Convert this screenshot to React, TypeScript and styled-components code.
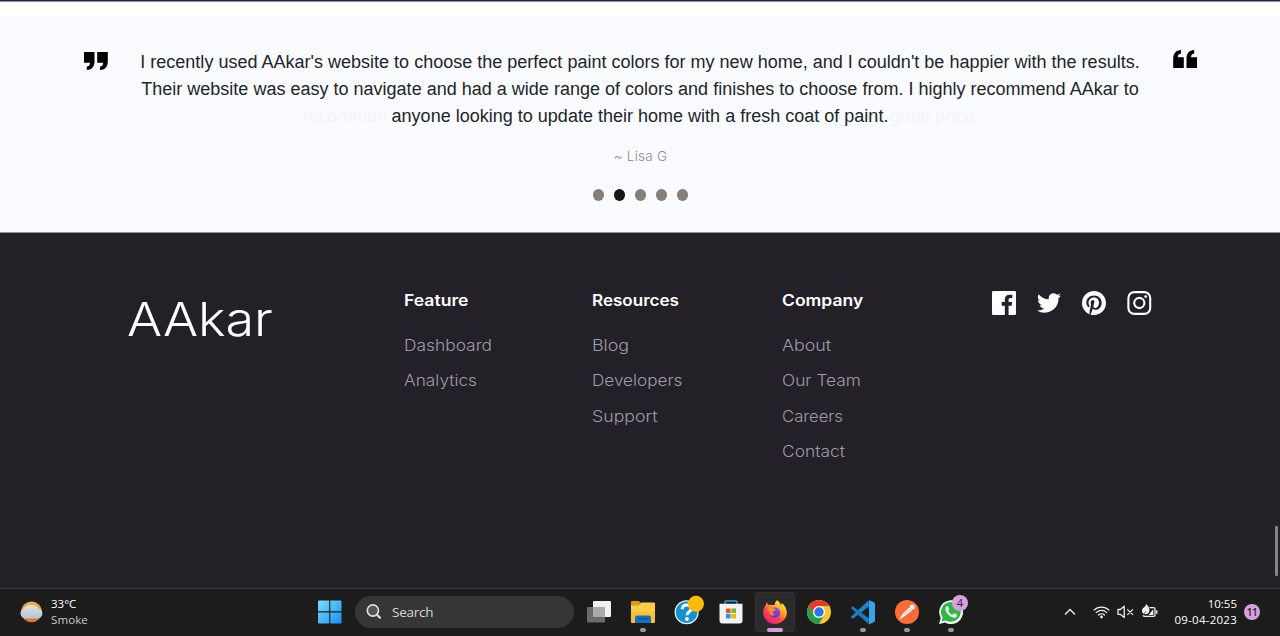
import React from "react";
import styled, { createGlobalStyle } from "styled-components";

const Global = createGlobalStyle`
  * { box-sizing: border-box; }
  body { margin: 0; background: #fff; overflow: hidden; }
  svg { display: block; flex: none; overflow: visible; }
`;

const brandFont = `Inter, "Liberation Sans", sans-serif`;
const systemFont = `"Open Sans", "Noto Sans", sans-serif`;

const Screen = styled.div`
  position: relative;
  width: 1280px;
  height: 636px;
  display: flex;
  flex-direction: column;
`;

const TopEdge = styled.div`
  height: 2px;
  margin-bottom: 14px;
  background: linear-gradient(#2a2145 50%, #93899f 50%);
`;

/* ---------- Testimonials ---------- */

const Testimonials = styled.section`
  height: 217px;
  padding: 33px 83px 0 84px;
  background: #fafbfe;
  border-bottom: 1px solid #918e97;
`;

const QuoteRow = styled.div`
  display: flex;
  justify-content: space-between;
`;

const QuoteMark = styled.svg<{ $flipped?: boolean }>`
  width: 24px;
  height: 18px;
  margin-top: ${(p) => (p.$flipped ? 1 : 3)}px;
  transform: ${(p) => (p.$flipped ? "rotate(180deg)" : "none")};
`;

const QuoteText = styled.blockquote`
  margin: 0;
  display: flex;
  flex-direction: column;
  align-items: center;
  font: 18px/27px "Liberation Sans", Arial, sans-serif;
  letter-spacing: 0.008px;
  color: #212529;
  white-space: nowrap;
`;

const QuoteLine = styled.span`
  position: relative;
  right: 0.5px;
`;

const Fading = styled.span<{ $side: "before" | "after" }>`
  position: absolute;
  top: 0;
  ${(p) => (p.$side === "before" ? "right: calc(100% + 4px)" : "left: calc(100% + 1px)")};
  color: #f4f5f8;
`;

const Author = styled.p`
  margin: 16px 0 0;
  text-align: center;
  font: 300 13.5px/21px ${brandFont};
  letter-spacing: 0.25px;
  color: #8d8d92;
`;

const Dots = styled.div`
  display: flex;
  justify-content: center;
  gap: 9.5px;
  margin: 22px 0.5px 0 0;
`;

const Dot = styled.i<{ $active?: boolean }>`
  width: 11.5px;
  height: 12px;
  border-radius: 50%;
  background: ${(p) => (p.$active ? "#151716" : "#857f79")};
`;

/* ---------- Footer ---------- */

const Footer = styled.footer`
  height: 355px;
  display: grid;
  grid-template-columns: 276px 188.5px 190px 210px 1fr;
  padding: 57px 0 0 127.5px;
  background: #232027;
  font-family: ${brandFont};
`;

const Brand = styled.div`
  justify-self: start;
  height: 60px;
  font-size: 46.5px;
  line-height: 58px;
  font-weight: 330;
  margin-left: -1px;
  transform: scaleX(1.12);
  transform-origin: left;
  color: #fff;
`;

const Column = styled.nav`
  display: flex;
  flex-direction: column;
  align-items: flex-start;
  padding-top: 1px;
`;

const Heading = styled.h4<{ $stretch: number }>`
  margin: 0 0 17.4px;
  font-size: 15.5px;
  line-height: 20px;
  font-weight: 570;
  transform: scaleX(${(p) => p.$stretch});
  transform-origin: left;
  color: #fff;
`;

const FooterLink = styled.a<{ $stretch: number }>`
  height: 35.1px;
  font-size: 15.5px;
  line-height: 36px;
  font-weight: 310;
  transform: scaleX(${(p) => p.$stretch});
  transform-origin: left;
  color: #9e9aa7;
`;

const Social = styled.div`
  display: flex;
  gap: 21px;
  padding-top: 1px;
`;

const SocialIcon = styled.svg.attrs({ viewBox: "0 0 24 24" })`
  width: 24px;
  height: 24px;
  fill: #fff;
`;

const Scrollbar = styled.div`
  position: absolute;
  right: 2px;
  top: 526px;
  width: 3px;
  height: 50px;
  border-radius: 1px;
  background: #858387;
`;

/* ---------- Taskbar ---------- */

const Taskbar = styled.div`
  height: 48px;
  display: flex;
  align-items: center;
  padding: 0 20px 2px 19px;
  background: #1c1c1c;
  border-top: 1px solid #3b393c;
  font-family: ${systemFont};
  color: #fff;
`;

const Weather = styled.div`
  width: 299px;
  display: flex;
  align-items: center;
  gap: 7px;
`;

const SmallText = styled.div<{ $dim?: boolean; $track?: number }>`
  font-size: 11.5px;
  line-height: 16px;
  white-space: nowrap;
  letter-spacing: ${(p) => p.$track ?? 0}px;
  color: ${(p) => (p.$dim ? "#c9c9c9" : "#fff")};
`;

const Search = styled.div`
  width: 219px;
  height: 32px;
  margin: 0 3px 0 13px;
  padding-left: 10px;
  display: flex;
  align-items: center;
  gap: 10px;
  border-radius: 16px;
  background: #363636;
  border: 1px solid #393939;
  font-size: 13.5px;
  letter-spacing: -0.25px;
  color: #d6d6d6;
`;

const AppSlot = styled.div<{ $focused?: boolean }>`
  position: relative;
  width: 40px;
  height: 40px;
  margin: 0 2px;
  display: flex;
  align-items: center;
  justify-content: center;
  border-radius: 4px;
  background: ${(p) => (p.$focused ? "#2c2b2c" : "transparent")};
  box-shadow: ${(p) => (p.$focused ? "inset 0 0 0 1px #333" : "none")};
`;

const RunMark = styled.i<{ $focused?: boolean }>`
  position: absolute;
  bottom: 0;
  left: 50%;
  transform: translateX(-50%);
  width: ${(p) => (p.$focused ? 16 : 6)}px;
  height: 3.5px;
  border-radius: 2px;
  background: ${(p) => (p.$focused ? "#d3a0dc" : "#9b9b9b")};
`;

const AppBadge = styled.span`
  position: absolute;
  top: 3px;
  right: 3px;
  width: 16px;
  height: 16px;
  border-radius: 50%;
  background: #d6a0df;
  color: #2b1c2e;
  font-size: 11px;
  line-height: 16px;
  text-align: center;
`;

const Tray = styled.div`
  margin-left: auto;
  display: flex;
  align-items: center;
`;

const TrayIcons = styled.div`
  display: flex;
  align-items: center;
  gap: 7px;
  margin: 0 16px 0 17px;
`;

const Clock = styled.div`
  display: flex;
  flex-direction: column;
  align-items: flex-end;
`;

const CountBadge = styled.span`
  width: 16px;
  height: 16px;
  margin-left: 7px;
  border-radius: 50%;
  background: #d6a0df;
  color: #2b1c2e;
  font-size: 10px;
  font-weight: 600;
  letter-spacing: -0.4px;
  line-height: 16px;
  text-align: center;
`;

const columns = [
  { title: "Feature", stretch: 1.135, links: [["Dashboard", 1.12], ["Analytics", 1.115]] },
  { title: "Resources", stretch: 1.1, links: [["Blog", 1.15], ["Developers", 1.105], ["Support", 1.145]] },
  { title: "Company", stretch: 1.13, links: [["About", 1.15], ["Our Team", 1.118], ["Careers", 1.075], ["Contact", 1.12]] },
] as { title: string; stretch: number; links: [string, number][] }[];

const Quote = ({ flipped }: { flipped?: boolean }) => (
  <QuoteMark viewBox="0 0 24 18" $flipped={flipped}>
    <path d="M0 0H10.5V9.5C10.5 14.5 7.6 18 2.8 18V14.6C5.3 14.3 6 12.6 6 10.7H0Z" />
    <path d="M13.2 0H23.8V9.5C23.8 14.5 20.8 18 16 18V14.6C18.5 14.3 19.2 12.6 19.2 10.7H13.2Z" />
  </QuoteMark>
);

const WeatherIcon = () => (
  <svg width="25" height="22" viewBox="0 0 25 22">
    <defs>
      <linearGradient id="sun" x1="0" y1="0" x2="0" y2="1">
        <stop offset="0" stopColor="#e8b83c" />
        <stop offset="1" stopColor="#dc6f2c" />
      </linearGradient>
      <linearGradient id="cloud" x1="0" y1="0" x2="0" y2="1">
        <stop offset="0" stopColor="#dfe2e4" />
        <stop offset="1" stopColor="#b9c3d8" />
      </linearGradient>
    </defs>
    <circle cx="12.5" cy="10.8" r="10.4" fill="url(#sun)" />
    <path d="M5.4 17.4A5.1 5.1 0 0 1 4.3 7.9C5.6 5 9 3.8 12.5 4 16 4.1 18.6 5.4 19.8 7.6A5.1 5.1 0 0 1 19.6 17.4Z" fill="url(#cloud)" />
  </svg>
);

const StartIcon = () => (
  <svg width="24" height="24" viewBox="0 0 24 24">
    <defs>
      <linearGradient id="win" x1="0" y1="0" x2="1" y2="1">
        <stop offset="0" stopColor="#7fdcfb" />
        <stop offset="1" stopColor="#1193f0" />
      </linearGradient>
    </defs>
    <path d="M0 1.5Q0 .5 1 .5H11.2V11.3H0ZM12.3.5H22.5Q23.5.5 23.5 1.5V11.3H12.3ZM0 12.5H11.2V23.5H1Q0 23.5 0 22.5ZM12.3 12.5H23.5V22.5Q23.5 23.5 22.5 23.5H12.3Z" fill="url(#win)" />
  </svg>
);

const SearchIcon = () => (
  <svg width="16" height="16" viewBox="0 0 16 16" fill="#555" stroke="#e4e4e4" strokeWidth="1.6" strokeLinecap="round">
    <circle cx="6.9" cy="6.5" r="5.6" />
    <path d="M10.9 10.7L14 13.8" strokeWidth="2" />
  </svg>
);

const TaskViewIcon = () => (
  <svg width="24" height="24" viewBox="0 0 24 24">
    <rect x="6" y="1" width="18" height="16" rx="1" fill="#f1f1f1" />
    <rect x="0" y="7" width="18" height="15.5" rx="1" fill="#6b6b6b" />
    <path d="M6 7H18V17H6Z" fill="#aaa" />
  </svg>
);

const FolderIcon = () => (
  <svg width="24" height="24" viewBox="0 0 24 24">
    <path d="M0 2Q0 1 1 1H8L10 3.5H9V8H0Z" fill="#dc9a12" />
    <path d="M0 5.5H8L10 2.5H23Q24 2.5 24 3.5V22.5H0Z" fill="#fccb48" />
    <path d="M0 12H24V21.5Q24 23 22.5 23H1.5Q0 23 0 21.5Z" fill="#fac02e" />
    <path d="M4 23V17.5Q4 15.5 6 15.5H18Q20 15.5 20 17.5V23Z" fill="#1270c2" />
    <path d="M7.5 18.7H16.5" stroke="#0a4f93" strokeWidth="1.2" />
  </svg>
);

const HelpIcon = () => (
  <svg width="30" height="30" viewBox="0 0 30 30">
    <circle cx="14.6" cy="15.2" r="12" fill="#f4fafd" />
    <circle cx="14.6" cy="15.2" r="10.8" fill="#0f92cf" />
    <path d="M10.2 12.2C10.2 9.4 12 8 14.6 8S19 9.6 19 12C19 15 15 15 15 18.2" fill="none" stroke="#fff" strokeWidth="3" />
    <circle cx="15" cy="22" r="1.9" fill="#fff" />
    <circle cx="24" cy="6.8" r="8" fill="#fdba0a" />
  </svg>
);

const StoreIcon = () => (
  <svg width="24" height="24" viewBox="0 0 24 24">
    <path d="M6 5V2.2Q6 1 7.2 1H16.8Q18 1 18 2.2V5" fill="none" stroke="#2ea7dc" strokeWidth="1.4" />
    <path d="M.5 3.8H23.5V20.5Q23.5 23.5 20.5 23.5H3.5Q.5 23.5 .5 20.5Z" fill="#f2f2f2" />
    <path d="M7 8.5H11.6V13H7Z" fill="#e8502a" />
    <path d="M12.4 8.5H17V13H12.4Z" fill="#7db62c" />
    <path d="M7 13.9H11.6V18.5H7Z" fill="#1f9bdf" />
    <path d="M12.4 13.9H17V18.5H12.4Z" fill="#f7b50e" />
  </svg>
);

const FirefoxIcon = () => (
  <svg width="24" height="24" viewBox="0 0 24 24">
    <defs>
      <linearGradient id="fox" x1=".85" y1=".05" x2=".2" y2=".95">
        <stop offset="0" stopColor="#fff04a" />
        <stop offset=".35" stopColor="#ffa528" />
        <stop offset=".65" stopColor="#ff4545" />
        <stop offset="1" stopColor="#ec1b84" />
      </linearGradient>
      <linearGradient id="globe" x1="0" y1="0" x2="0" y2="1">
        <stop offset="0" stopColor="#a04fe8" />
        <stop offset="1" stopColor="#5b3ac0" />
      </linearGradient>
    </defs>
    <path d="M14 .3C16 1.6 17.4 3.2 17.9 5 18.7 4.6 18.8 3.6 18.6 2.8 21.6 5.2 23.8 8.8 23.8 12.5A11.8 11.4 0 0 1 .2 12.6C.2 9.7 1.3 6.7 3 4.6L3.4 2.2 5.8 5C7 4.6 8 4.6 9.2 5 10.4 5 11 4.7 11.8 4.4 12 2.7 12.7 1.2 14 .3Z" fill="url(#fox)" />
    <circle cx="11.8" cy="12.6" r="5.3" fill="url(#globe)" />
    <path d="M5 7.8C7 6.6 8.5 7.6 9.8 8.5L12.9 9.2C12.6 10.7 10.6 10.6 9.9 11.6 9.2 13 10 14.5 12 14.6 10.3 16.2 7.8 15.3 6.7 13.4 6.2 11.5 5 10.5 5 7.8Z" fill="#ff8b26" />
  </svg>
);

const ChromeIcon = () => (
  <svg width="24" height="24" viewBox="0 0 24 24">
    <circle cx="12" cy="12" r="12" fill="#fdc62f" />
    <path d="M1.61 6A12 12 0 0 1 22.39 6H12L6.8 15Z" fill="#e33b2e" />
    <path d="M1.61 6A12 12 0 0 0 12 24L17.2 15 12 17.5 6.8 15Z" fill="#1fa052" />
    <circle cx="12" cy="12" r="6" fill="#fff" />
    <circle cx="12" cy="12" r="4.7" fill="#2b74e8" />
  </svg>
);

const CodeIcon = () => (
  <svg width="24" height="24" viewBox="0 0 24 24">
    <path d="M17.3.4L18.2 6.3 2.1 18.4Q1.6 18.7 1.1 18.3L.2 17.4Q-.2 16.9.3 16.4Z" fill="#1f83c6" />
    <path d="M.3 8.6Q-.2 8.1.2 7.6L1.1 6.7Q1.6 6.3 2.1 6.6L18.2 18.5 17.3 24Z" fill="#1b78bd" />
    <path d="M17.3.4Q17.8 0 18.3.2L23.2 2.6Q24 3 24 3.9V20.8Q24 21.6 23.2 22L18.3 24.3Q17.5 24.5 17 24 18 24.3 18 23V1.6Q18 .2 17.3.4Z" fill="#36a3ea" />
  </svg>
);

const PostmanIcon = () => (
  <svg width="24" height="24" viewBox="0 0 24 24">
    <circle cx="12" cy="12" r="12" fill="#ff6c37" />
    <circle cx="17.3" cy="6.9" r="2.5" fill="#fff" />
    <path d="M14.2 7.4L17 10.5 9.3 16.2 4.6 19.4 5 17.9 8 13.6Z" fill="#fff" />
    <path d="M8.5 14.3L15.6 9.2" stroke="#ff6c37" strokeWidth=".5" />
  </svg>
);

const WhatsAppIcon = () => (
  <svg width="24" height="24" viewBox="0 0 24 24">
    <path d="M0 24L1.7 17.9A11.9 11.9 0 1 1 6.1 22.4Z" fill="#fff" />
    <path d="M2.4 21.6L3.6 17.4A9.9 9.9 0 1 1 6.9 20.5Z" fill="#2fb944" />
    <path d="M8.2 6.2C7 6.5 6.3 7.7 6.4 9 7 13.2 11 17.2 15.3 17.7 16.6 17.7 17.8 16.9 18 15.5L17.8 14.6 15 13.3 13.5 15C11.4 14.2 9.9 12.7 9 10.8L10.2 9.3 9.2 6.7Q8.9 6.1 8.2 6.2Z" fill="#fff" />
  </svg>
);

const ChevronUp = () => (
  <svg width="12" height="8" viewBox="0 0 12 8" fill="none" stroke="#eee" strokeWidth="1.4">
    <path d="M1 6.5L6 1.5 11 6.5" />
  </svg>
);

const WifiIcon = () => (
  <svg width="17" height="14" viewBox="0 0 17 14" fill="none" stroke="#eee" strokeWidth="1.2" strokeLinecap="round">
    <path d="M1 5.2A10.6 10.6 0 0 1 16 5.2M3.2 7.6A7.5 7.5 0 0 1 13.8 7.6M5.5 10A4.3 4.3 0 0 1 11.5 10" />
    <circle cx="8.5" cy="12" r="1.4" fill="#eee" stroke="none" />
  </svg>
);

const MutedIcon = () => (
  <svg width="17" height="14" viewBox="0 0 17 14" fill="none" stroke="#eee" strokeWidth="1.3" strokeLinejoin="round">
    <path d="M1 4.5H3.3L7.2 1.2V12.6L3.3 9.3H1ZM10.3 4.4L16 9.9M16 4.4L10.3 9.9" />
  </svg>
);

const BatteryIcon = () => (
  <svg width="17" height="15" viewBox="0 0 17 15" fill="none" stroke="#eee" strokeWidth="1.3">
    <path d="M8.5 3.6H12.6Q14 3.6 14 5V11Q14 12.4 12.6 12.4H4Q2.4 12.4 2 11M15.8 6.3V9.7" />
    <path d="M7.6 10.9L12.3 5.3V10.9Z" fill="#eee" stroke="none" />
    <path d="M5 0C7.7 2.1 8.9 4.5 8.3 7.5 7.5 10.3 4.5 10.9 2 9.6.5 7.9.8 5.3 2 4.1 3.8 2.8 4.8 2 5 0Z" fill="#eee" stroke="none" />
    <path d="M1.5 12L5 7" stroke="#1c1c1c" strokeWidth=".6" />
  </svg>
);

const apps: { icon: React.ReactNode; running?: boolean; focused?: boolean; badge?: string }[] = [
  { icon: <TaskViewIcon /> },
  { icon: <FolderIcon />, running: true },
  { icon: <HelpIcon /> },
  { icon: <StoreIcon /> },
  { icon: <FirefoxIcon />, running: true, focused: true },
  { icon: <ChromeIcon /> },
  { icon: <CodeIcon />, running: true },
  { icon: <PostmanIcon />, running: true },
  { icon: <WhatsAppIcon />, running: true, badge: "4" },
];

export default function App() {
  return (
    <Screen>
      <Global />
      <TopEdge />
      <Testimonials>
        <QuoteRow>
          <Quote />
          <QuoteText>
            <QuoteLine>
              I recently used AAkar's website to choose the perfect paint colors for my new home, and I couldn't be happier with the results.
            </QuoteLine>
            <QuoteLine>
              Their website was easy to navigate and had a wide range of colors and finishes to choose from. I highly recommend AAkar to
            </QuoteLine>
            <QuoteLine>
              <Fading $side="before">recommen</Fading>
              anyone looking to update their home with a fresh coat of paint.
              <Fading $side="after">great price.</Fading>
            </QuoteLine>
          </QuoteText>
          <Quote flipped />
        </QuoteRow>
        <Author>~ Lisa G</Author>
        <Dots>
          {[0, 1, 2, 3, 4].map((i) => (
            <Dot key={i} $active={i === 1} />
          ))}
        </Dots>
      </Testimonials>

      <Footer>
        <Brand>AAkar</Brand>
        {columns.map((c) => (
          <Column key={c.title}>
            <Heading $stretch={c.stretch}>{c.title}</Heading>
            {c.links.map(([label, stretch]) => (
              <FooterLink key={label} $stretch={stretch}>{label}</FooterLink>
            ))}
          </Column>
        ))}
        <Social>
          <SocialIcon>
            <path d="M22.675 0H1.325C.593 0 0 .593 0 1.325v21.351C0 23.407.593 24 1.325 24H12.82v-9.294H9.692v-3.622h3.128V8.413c0-3.1 1.893-4.788 4.659-4.788 1.325 0 2.463.099 2.795.143v3.24l-1.918.001c-1.504 0-1.795.715-1.795 1.763v2.313h3.587l-.467 3.622h-3.12V24h6.116c.73 0 1.323-.593 1.323-1.325V1.325C24 .593 23.407 0 22.675 0z" />
          </SocialIcon>
          <SocialIcon>
            <path d="M24 4.557a9.83 9.83 0 01-2.828.775 4.932 4.932 0 002.165-2.724 9.864 9.864 0 01-3.127 1.195 4.916 4.916 0 00-3.594-1.555c-3.179 0-5.515 2.966-4.797 6.045A13.978 13.978 0 011.671 3.149a4.93 4.93 0 001.523 6.574 4.903 4.903 0 01-2.229-.616c-.054 2.281 1.581 4.415 3.949 4.89a4.935 4.935 0 01-2.224.084 4.928 4.928 0 004.6 3.419A9.9 9.9 0 010 19.54a13.94 13.94 0 007.548 2.212c9.142 0 14.307-7.721 13.995-14.646A10.025 10.025 0 0024 4.557z" />
          </SocialIcon>
          <SocialIcon>
            <path d="M12 0C5.373 0 0 5.372 0 12c0 5.084 3.163 9.426 7.627 11.174-.105-.949-.2-2.405.042-3.441.218-.937 1.407-5.965 1.407-5.965s-.359-.719-.359-1.782c0-1.668.967-2.914 2.171-2.914 1.023 0 1.518.769 1.518 1.69 0 1.029-.655 2.568-.994 3.995-.283 1.194.599 2.169 1.777 2.169 2.133 0 3.772-2.249 3.772-5.495 0-2.873-2.064-4.882-5.012-4.882-3.414 0-5.418 2.561-5.418 5.207 0 1.031.397 2.138.893 2.738a.36.36 0 01.083.345l-.333 1.36c-.053.22-.174.267-.402.161-1.499-.698-2.436-2.889-2.436-4.649 0-3.785 2.75-7.262 7.929-7.262 4.163 0 7.398 2.967 7.398 6.931 0 4.136-2.607 7.464-6.227 7.464-1.216 0-2.359-.631-2.75-1.378l-.748 2.853c-.271 1.043-1.002 2.35-1.492 3.146 1.124.347 2.317.535 3.554.535 6.627 0 12-5.373 12-12 0-6.628-5.373-12-12-12z" />
          </SocialIcon>
          <SocialIcon>
            <rect x="1.4" y="1.1" width="21.8" height="21.8" rx="6" fill="none" stroke="#fff" strokeWidth="2.1" />
            <circle cx="12.3" cy="12" r="5.1" fill="none" stroke="#fff" strokeWidth="2.1" />
            <circle cx="18.7" cy="5.6" r="1.44" />
          </SocialIcon>
        </Social>
      </Footer>

      <Taskbar>
        <Weather>
          <WeatherIcon />
          <div>
            <SmallText>33°C</SmallText>
            <SmallText $dim $track={0.1}>Smoke</SmallText>
          </div>
        </Weather>
        <StartIcon />
        <Search>
          <SearchIcon />
          Search
        </Search>
        {apps.map((a, i) => (
          <AppSlot key={i} $focused={a.focused}>
            {a.icon}
            {a.running && <RunMark $focused={a.focused} />}
            {a.badge && <AppBadge>{a.badge}</AppBadge>}
          </AppSlot>
        ))}
        <Tray>
          <ChevronUp />
          <TrayIcons>
            <WifiIcon />
            <MutedIcon />
            <BatteryIcon />
          </TrayIcons>
          <Clock>
            <SmallText>10:55</SmallText>
            <SmallText $track={0.25}>09-04-2023</SmallText>
          </Clock>
          <CountBadge>11</CountBadge>
        </Tray>
      </Taskbar>
      <Scrollbar />
    </Screen>
  );
}
